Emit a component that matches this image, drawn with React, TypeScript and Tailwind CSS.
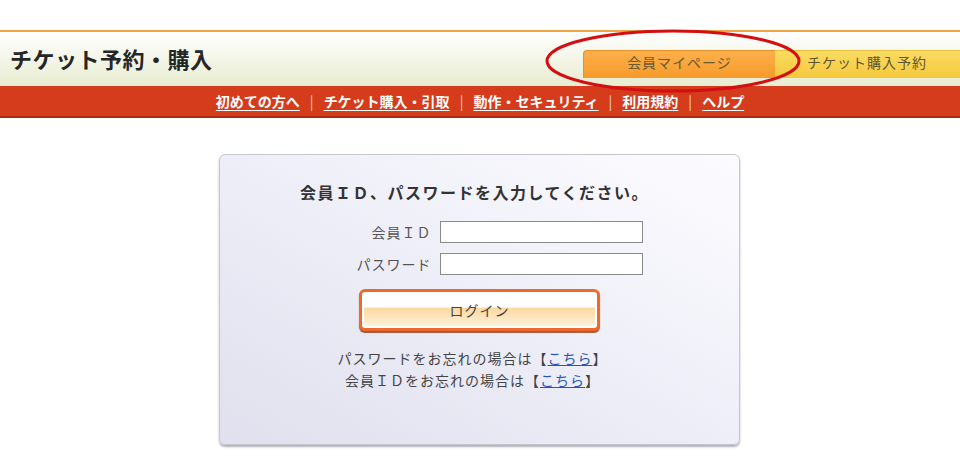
import React from 'react';

const NAV_LINKS = ['初めての方へ', 'チケット購入・引取', '動作・セキュリティ', '利用規約', 'ヘルプ'];

const App: React.FC = () => {
  return (
    <div className="relative w-[960px] h-[471px] bg-white overflow-hidden font-['Noto_Sans_CJK_JP','Noto_Sans',sans-serif] text-[#333]">
      {/* Top spacing + orange rule */}
      <div className="h-[30px]" />
      <div className="h-[2px] bg-[#f0a448]" />

      {/* Header band */}
      <header className="h-[54px] flex items-end justify-between bg-gradient-to-b from-white to-[#e8ecd0]">
        <h1 className="self-center pl-[10px] pb-[2px] text-[22px] tracking-[0.5px] font-bold text-[#262626] leading-none">
          チケット予約・購入
        </h1>
        <nav className="flex h-[28px] mb-[8px]">
          <div className="w-[192px] flex items-center justify-center pb-[4px] rounded-tl-[4px] bg-gradient-to-b from-[#fbb04a] to-[#f79a28] border-t border-l border-[#e8902a] text-[14px] tracking-[1px] text-[#6b5a30]">
            会員マイページ
          </div>
          <div className="w-[185px] flex items-center pl-[32px] pb-[4px] bg-gradient-to-b from-[#fadc62] to-[#f5c83a] border-t border-[#e8c040] text-[14px] tracking-[1px] text-[#5e5630]">
            チケット購入予約
          </div>
        </nav>
      </header>

      {/* Red link bar */}
      <div className="h-[32px] flex items-center justify-center bg-[#d43c1c] border-b-2 border-[#a82a12]">
        <ul className="flex items-center text-[14px] font-bold text-white leading-none">
          {NAV_LINKS.map((label, i) => (
            <li key={label} className="flex items-center">
              {i > 0 && <span className="px-[10px] font-normal text-[#f3d0c6]">|</span>}
              <a href="#" className="underline underline-offset-[3px] decoration-1">
                {label}
              </a>
            </li>
          ))}
        </ul>
      </div>

      {/* Login box */}
      <main className="flex justify-center pt-[36px]">
        <div className="w-[521px] h-[291px] ml-[-1px] rounded-[6px] border border-[#c6c6d2] bg-gradient-to-bl from-[#fcfcff] via-[#eeeef8] to-[#e0e0ee] shadow-[0_2px_2px_rgba(80,80,100,0.45)] flex flex-col items-center">
          <p className="mt-[25px] ml-[-10px] text-[16px] font-bold tracking-[1.5px] text-[#333]">
            会員ＩＤ、パスワードを入力してください。
          </p>

          <div className="mt-[17px] grid grid-cols-[auto_203px] gap-x-[8px] gap-y-[10px] items-center ml-[40px]">
            <label className="text-right text-[14px] tracking-[1px] text-[#555]">会員ＩＤ</label>
            <input className="h-[22px] border border-[#8a8a8a] bg-white" />
            <label className="text-right text-[14px] tracking-[1px] text-[#555]">パスワード</label>
            <input type="password" className="h-[22px] border border-[#8a8a8a] bg-white" />
          </div>

          <button className="mt-[14px] w-[241px] h-[42px] rounded-[6px] border-[3px] border-[#ee6a2c] bg-white p-[2px] shadow-[0_2px_1px_rgba(140,50,10,0.8)]">
            <span className="flex h-full items-center justify-center rounded-[3px] bg-gradient-to-b from-white from-40% via-[#fbd9a0] via-45% to-[#fff0da] text-[14px] tracking-[1px] text-[#444]">
              ログイン
            </span>
          </button>

          <div className="mt-[16px] flex flex-col items-center text-[14px] tracking-[1px] leading-[22px] text-[#444] ml-[-14px]">
            <p>
              パスワードをお忘れの場合は【<a href="#" className="text-[#2a55b8] underline">こちら</a>】
            </p>
            <p>
              会員ＩＤをお忘れの場合は【<a href="#" className="text-[#2a55b8] underline">こちら</a>】
            </p>
          </div>
        </div>
      </main>

      {/* Red annotation ellipse */}
      <svg className="absolute left-[544px] top-[28px]" width="258" height="66" viewBox="0 0 258 66">
        <ellipse cx="129" cy="33" rx="126" ry="30" fill="none" stroke="#d40f12" strokeWidth="3" />
      </svg>
    </div>
  );
};

export default App;
